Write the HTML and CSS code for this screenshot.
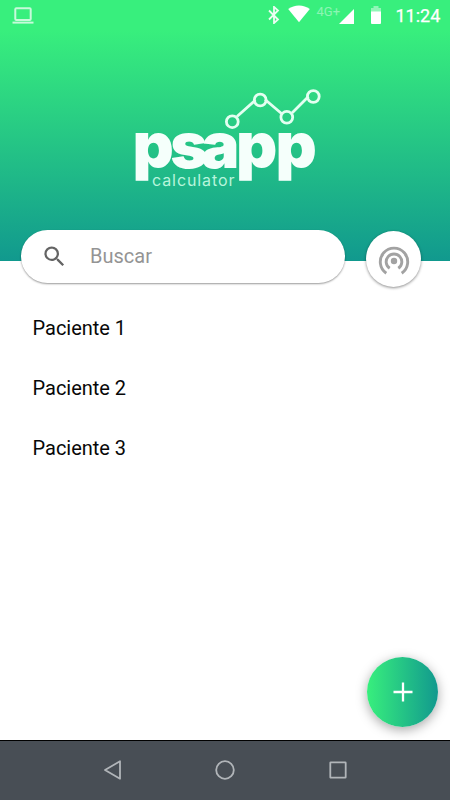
FILE: index.html
```html
<!DOCTYPE html>
<html lang="es">
<head>
<meta charset="utf-8">
<title>psapp calculator</title>
<link rel="stylesheet" href="styles.css">
</head>
<body>
<div class="app">
  <header class="header">
    <div class="status">
      <svg class="laptop" width="22" height="18" viewBox="0 0 22 18"><rect x="3.3" y="1.3" width="15.4" height="11.6" rx="1" fill="none" stroke="currentColor" stroke-width="2"/><path d="M.5 14.600h21v2H.5z" fill="currentColor"/></svg>
      <div class="status-icons">
        <svg class="bluetooth" width="12" height="18" viewBox="0 0 12 18" fill="none" stroke="currentColor" stroke-width="1.8"><path d="M1 4.500l9 9-4 3.600V.9l4 3.600-9 9"/></svg>
        <svg class="wifi" width="22" height="18" viewBox="0 0 22 18"><path d="M11 17.300L.2 4C3.400 1.800 7 .5 11 .5S18.600 1.800 21.800 4z" fill="currentColor"/></svg>
        <span class="network">4G+</span>
        <svg class="signal" width="15" height="15" viewBox="0 0 15 15"><path d="M15 0v15H0z" fill="currentColor"/></svg>
        <svg class="battery" width="12" height="18" viewBox="0 0 12 18"><path d="M3.500 0h5v2H11v4H1V2h2.500z" fill="currentColor" opacity=".45"/><path d="M1 5.500h10V17q0 1-1 1H2q-1 0-1-1z" fill="currentColor"/></svg>
      </div>
      <span class="clock">11:24</span>
    </div>
    <svg class="logo" width="190" height="110" viewBox="0 0 190 110">
      <g fill="none" stroke="currentColor" stroke-width="2.800" class="trend">
        <path d="M107 36.500L125.500 20M135 19.500L151.500 33.500M162 33L178.500 16.500"/>
        <circle cx="102.300" cy="41.700" r="5.900"/><circle cx="130.200" cy="20" r="5.900"/><circle cx="156.800" cy="37.300" r="5.900"/><circle cx="183.300" cy="16.500" r="5.900"/>
      </g>
      <text class="brand" x="2.500 40.300 71.300 106 145.500" y="87.500">psapp</text>
      <text class="subtitle" x="22" y="106" textLength="82.500">calculator</text>
    </svg>
  </header>
  <div class="search-row">
    <div class="search">
      <svg width="27" height="27" viewBox="0 0 24 24"><path fill="currentColor" d="M15.500 14h-.79l-.28-.27A6.471 6.471 0 0 0 16 9.500 6.500 6.500 0 1 0 9.500 16c1.610 0 3.090-.59 4.230-1.570l.27.28v.79l5 4.990L20.490 19l-4.990-5zm-6 0C7.010 14 5 11.990 5 9.500S7.010 5 9.500 5 14 7.010 14 9.500 11.990 14 9.500 14z"/></svg>
      <span>Buscar</span>
    </div>
    <div class="broadcast">
      <svg width="32" height="32" viewBox="0 0 32 32" fill="none" stroke="currentColor" stroke-width="2.900"><circle cx="16" cy="16" r="3.200" fill="currentColor" stroke="none"/><path d="M11.700 23.300A7.800 7.800 0 1 1 20.300 23.300"/><path d="M8.300 28.200A13.700 13.700 0 1 1 23.700 28.200"/></svg>
    </div>
  </div>
  <main class="patients">
    <div class="patient">Paciente 1</div>
    <div class="patient">Paciente 2</div>
    <div class="patient">Paciente 3</div>
  </main>
  <div class="fab"><svg width="20" height="20" viewBox="0 0 20 20"><path d="M10 .5v19M.5 10h19" stroke="currentColor" stroke-width="2.300"/></svg></div>
  <nav class="navbar">
    <svg width="20" height="20" viewBox="0 0 20 20"><path d="M17 1.300v17.400L2 10z"/></svg>
    <svg width="20" height="20" viewBox="0 0 20 20"><circle cx="10" cy="10" r="8.800"/></svg>
    <svg width="20" height="20" viewBox="0 0 20 20"><rect x="2.300" y="2.300" width="15.400" height="15.400" rx=".5"/></svg>
  </nav>
</div>
</body>
</html>
```

FILE: styles.css
```css
* { box-sizing: border-box; }
body { margin: 0; font-family: Roboto, sans-serif; background: #fff; }
svg { display: block; flex: none; }
.app { position: relative; width: 450px; height: 800px; display: flex; flex-direction: column; overflow: hidden; }
.header { height: 261px; flex: none; color: #fff; background: linear-gradient(#38ef7d 0, #38ef7d 30px, #11998e 100%); }
.status { height: 32px; display: flex; align-items: center; padding: 0 10px 0 12px; }
.laptop { opacity: .72; margin-top: -1px; }
.status-icons { display: flex; align-items: center; margin-left: auto; height: 32px; }
.bluetooth { opacity: .9; margin: -2px 8px 0 0; }
.wifi { margin-top: -4px; margin-right: 6px; }
.network { width: 25px; font-size: 13px; line-height: 14px; opacity: .42; margin: -8px -3px 0 1px; }
.signal { margin-right: 16px; }
.battery { margin: -2px 14px 0 0; }
.clock { width: 44.500px; font-size: 18px; font-weight: 400; line-height: 32px; -webkit-text-stroke: .25px currentColor; }
.logo { margin: 48px 0 0 130px; overflow: visible; }
.trend { color: #e4fff1; }
.brand { font: 900 64px Inter, sans-serif; fill: #f5fffb; }
.subtitle { font: 400 16px Inter, sans-serif; fill: #b8f5dc; }
.search-row { display: flex; align-items: center; gap: 21px; height: 58px; margin: -31px 0 0 21px; flex: none; }
.search { display: flex; align-items: center; gap: 22px; width: 324px; height: 53px; margin-top: -5px; padding-left: 20px; border-radius: 27px; background: #fff; box-shadow: 0 1px 2px rgba(0,0,0,.4); color: #646464; }
.search span { font-size: 20px; color: #949494; margin-top: -2px; }
.broadcast { display: flex; align-items: center; justify-content: center; width: 55px; height: 56px; border-radius: 50%; background: #fff; color: #a2a2a2; box-shadow: 0 1px 3px rgba(0,0,0,.45); padding-top: 3px; }
.patients { flex: 1; padding: 10px 32.600px 0; }
.patient { height: 60px; line-height: 60px; font-size: 20px; letter-spacing: -.03px; color: #080808; }
.fab { position: absolute; left: 367px; top: 657px; width: 71px; height: 70px; border-radius: 50%; display: flex; align-items: center; justify-content: center; color: #fff; background: linear-gradient(90deg, #38ef7d, #11998e); box-shadow: 0 3px 12px rgba(0,0,0,.35); }
.navbar { height: 60px; flex: none; display: flex; align-items: center; justify-content: center; gap: 92.500px; padding-bottom: 2px; background: #484e55; border-top: 1px solid #000; color: #b1b5b9; position: relative; }
.navbar svg { fill: none; stroke: currentColor; stroke-width: 1.800; stroke-linejoin: round; }
```
